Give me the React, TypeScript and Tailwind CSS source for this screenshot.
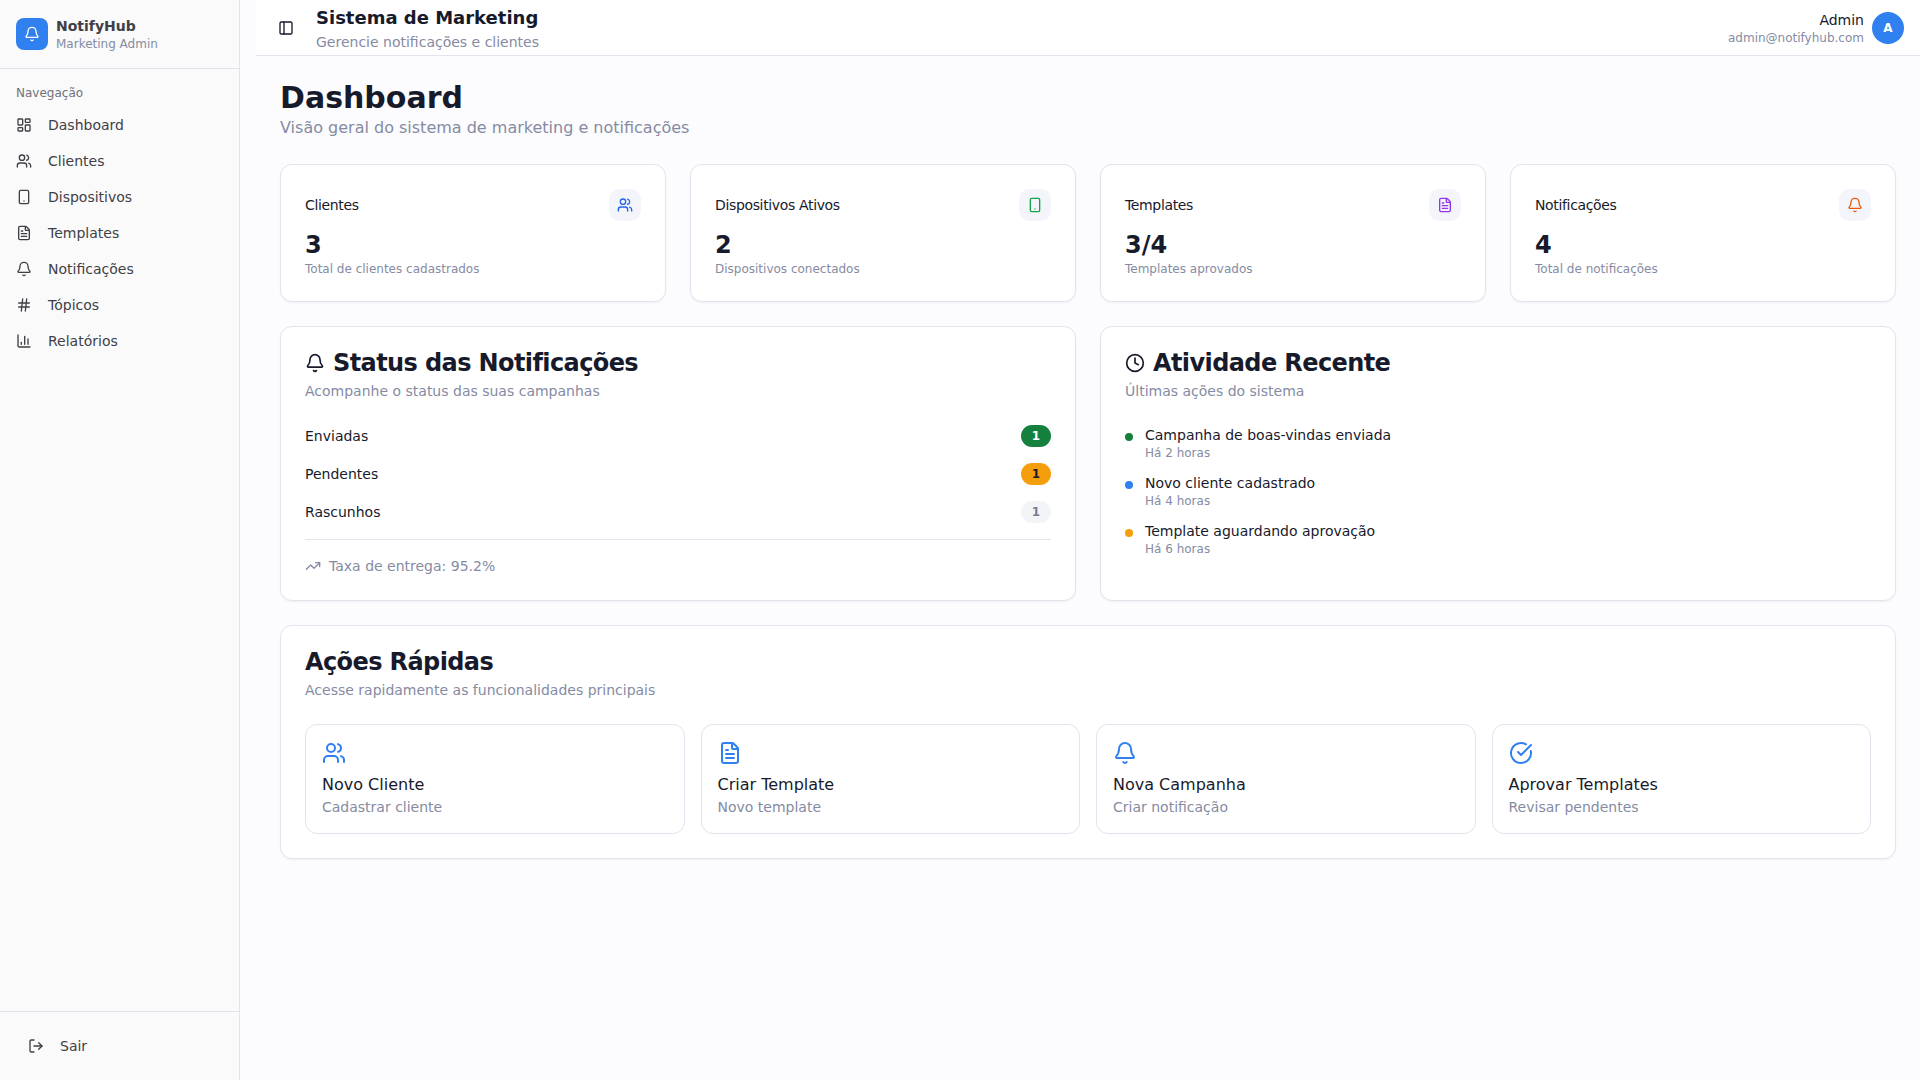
import React from 'react';
import {
  Bell,
  ChartColumn,
  CircleCheckBig,
  Clock,
  FileText,
  Hash,
  LayoutDashboard,
  LogOut,
  PanelLeft,
  Smartphone,
  TrendingUp,
  Users,
} from 'lucide-react';

const navItems = [
  { label: 'Dashboard', icon: LayoutDashboard },
  { label: 'Clientes', icon: Users },
  { label: 'Dispositivos', icon: Smartphone },
  { label: 'Templates', icon: FileText },
  { label: 'Notificações', icon: Bell },
  { label: 'Tópicos', icon: Hash },
  { label: 'Relatórios', icon: ChartColumn },
];

const stats = [
  { title: 'Clientes', value: '3', desc: 'Total de clientes cadastrados', icon: Users, color: 'text-[#2563eb]' },
  { title: 'Dispositivos Ativos', value: '2', desc: 'Dispositivos conectados', icon: Smartphone, color: 'text-[#16a34a]' },
  { title: 'Templates', value: '3/4', desc: 'Templates aprovados', icon: FileText, color: 'text-[#9333ea]' },
  { title: 'Notificações', value: '4', desc: 'Total de notificações', icon: Bell, color: 'text-[#ea580c]' },
];

const statusRows = [
  { label: 'Enviadas', badge: 'border-transparent bg-[#15803d] text-white' },
  { label: 'Pendentes', badge: 'border-transparent bg-[#f59e0b] text-[#171a2b]' },
  { label: 'Rascunhos', badge: 'border-transparent bg-[#f3f4f8] text-[#767c94]' },
];

const activity = [
  { title: 'Campanha de boas-vindas enviada', time: 'Há 2 horas', dot: 'bg-[#15803d]' },
  { title: 'Novo cliente cadastrado', time: 'Há 4 horas', dot: 'bg-[#3080f0]' },
  { title: 'Template aguardando aprovação', time: 'Há 6 horas', dot: 'bg-[#f59e0b]' },
];

const quickActions = [
  { title: 'Novo Cliente', desc: 'Cadastrar cliente', icon: Users },
  { title: 'Criar Template', desc: 'Novo template', icon: FileText },
  { title: 'Nova Campanha', desc: 'Criar notificação', icon: Bell },
  { title: 'Aprovar Templates', desc: 'Revisar pendentes', icon: CircleCheckBig },
];

function Sidebar() {
  return (
    <aside className="flex h-[1080px] w-60 shrink-0 flex-col border-r border-[#e3e3ee] bg-[#fafafa]">
      <div className="flex items-center gap-2 border-b border-[#e3e3ee] p-4">
        <div className="flex h-8 w-8 items-center justify-center rounded-lg bg-[#3080f0] text-white">
          <Bell className="h-4 w-4" />
        </div>
        <div>
          <div className="text-sm font-bold text-[#3f3f46]">NotifyHub</div>
          <div className="text-xs text-[#858ba3]">Marketing Admin</div>
        </div>
      </div>
      <div className="flex-1 p-2">
        <div className="flex h-8 items-center px-2 text-xs text-[#71717a]">Navegação</div>
        <ul className="flex flex-col gap-1">
          {navItems.map((item) => (
            <li key={item.label} className="flex h-8 items-center gap-4 px-2 text-sm text-[#3f3f46]">
              <item.icon className="h-4 w-4" />
              <span>{item.label}</span>
            </li>
          ))}
        </ul>
      </div>
      <div className="border-t border-[#e3e3ee] p-4">
        <button type="button" className="flex h-9 w-full items-center gap-4 px-3 text-sm text-[#3f3f46]">
          <LogOut className="h-4 w-4" />
          <span>Sair</span>
        </button>
      </div>
    </aside>
  );
}

function Header() {
  return (
    <header className="flex h-14 items-center justify-between border-b border-[#e3e3ee] bg-white px-4">
      <div className="flex items-center gap-4">
        <button type="button" className="flex h-7 w-7 items-center justify-center text-[#171a2b]">
          <PanelLeft className="h-4 w-4" />
        </button>
        <div>
          <h1 className="text-lg font-bold text-[#171a2b]">Sistema de Marketing</h1>
          <p className="text-sm text-[#858ba3]">Gerencie notificações e clientes</p>
        </div>
      </div>
      <div className="flex items-center gap-2">
        <div className="text-right">
          <div className="text-sm text-[#171a2b]">Admin</div>
          <div className="text-xs text-[#858ba3]">admin@notifyhub.com</div>
        </div>
        <div className="flex h-8 w-8 items-center justify-center rounded-full bg-[#3080f0] text-xs font-bold text-white">A</div>
      </div>
    </header>
  );
}

export default function App() {
  return (
    <div className="flex min-h-screen bg-[#fcfcfe] font-['DejaVu_Sans',sans-serif]">
      <Sidebar />
      <div className="ml-4 min-w-0 flex-1">
        <Header />
        <main className="flex flex-col gap-6 p-6">
          <div>
            <h2 className="text-3xl font-bold text-[#171a2b]">Dashboard</h2>
            <p className="text-base text-[#858ba3]">Visão geral do sistema de marketing e notificações</p>
          </div>

          <div className="grid grid-cols-4 gap-6">
            {stats.map((s) => (
              <div key={s.title} className="rounded-xl border border-[#e3e3ee] bg-white p-6 shadow-xs">
                <div className="flex items-center justify-between pb-2">
                  <span className="text-sm tracking-tight text-[#171a2b]">{s.title}</span>
                  <div className="flex h-8 w-8 items-center justify-center rounded-[10px] bg-[#f4f5fa]">
                    <s.icon className={`h-4 w-4 ${s.color}`} />
                  </div>
                </div>
                <div className="text-2xl font-bold text-[#171a2b]">{s.value}</div>
                <div className="text-xs text-[#858ba3]">{s.desc}</div>
              </div>
            ))}
          </div>

          <div className="grid grid-cols-2 gap-6">
            <section className="rounded-xl border border-[#e3e3ee] bg-white p-6 shadow-xs">
              <h3 className="flex items-center gap-2 text-2xl leading-none font-bold tracking-tight text-[#171a2b]">
                <Bell className="h-5 w-5" />
                Status das Notificações
              </h3>
              <p className="mt-1.5 text-sm text-[#858ba3]">Acompanhe o status das suas campanhas</p>
              <div className="mt-6 flex flex-col gap-4">
                {statusRows.map((r) => (
                  <div key={r.label} className="flex items-center justify-between">
                    <span className="text-sm text-[#171a2b]">{r.label}</span>
                    <span className={`rounded-full border px-2.5 py-0.5 text-xs font-bold ${r.badge}`}>1</span>
                  </div>
                ))}
              </div>
              <div className="my-4 h-px bg-[#e3e3ee]" />
              <div className="flex items-center gap-2 text-sm text-[#858ba3]">
                <TrendingUp className="h-4 w-4" />
                Taxa de entrega: 95.2%
              </div>
            </section>

            <section className="rounded-xl border border-[#e3e3ee] bg-white p-6 shadow-xs">
              <h3 className="flex items-center gap-2 text-2xl leading-none font-bold tracking-tight text-[#171a2b]">
                <Clock className="h-5 w-5" />
                Atividade Recente
              </h3>
              <p className="mt-1.5 text-sm text-[#858ba3]">Últimas ações do sistema</p>
              <div className="mt-6 flex flex-col gap-3">
                {activity.map((a) => (
                  <div key={a.title} className="flex items-start gap-3">
                    <span className={`mt-2 h-2 w-2 rounded-full ${a.dot}`} />
                    <div>
                      <div className="text-sm text-[#171a2b]">{a.title}</div>
                      <div className="text-xs text-[#858ba3]">{a.time}</div>
                    </div>
                  </div>
                ))}
              </div>
            </section>
          </div>

          <section className="rounded-xl border border-[#e3e3ee] bg-white p-6 shadow-xs">
            <h3 className="text-2xl leading-none font-bold tracking-tight text-[#171a2b]">Ações Rápidas</h3>
            <p className="mt-1.5 text-sm text-[#858ba3]">Acesse rapidamente as funcionalidades principais</p>
            <div className="mt-6 grid grid-cols-4 gap-4">
              {quickActions.map((q) => (
                <div key={q.title} className="rounded-xl border border-[#e3e3ee] bg-white p-4">
                  <q.icon className="mb-2 h-6 w-6 text-[#3080f0]" />
                  <div className="text-base text-[#171a2b]">{q.title}</div>
                  <div className="text-sm text-[#858ba3]">{q.desc}</div>
                </div>
              ))}
            </div>
          </section>
        </main>
      </div>
    </div>
  );
}
